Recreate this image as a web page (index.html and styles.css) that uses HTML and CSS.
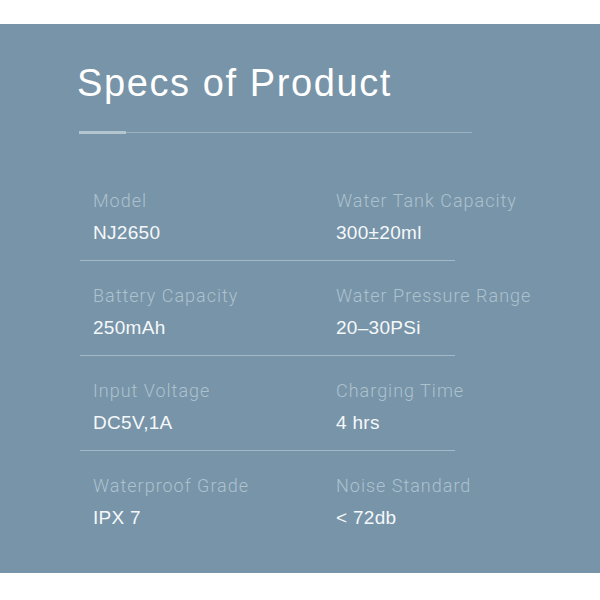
FILE: index.html
```html
<!DOCTYPE html>
<html lang="en">
<head>
<meta charset="utf-8">
<title>Specs of Product</title>
<link rel="stylesheet" href="styles.css">
</head>
<body>
<section class="panel">
  <h1 class="title">Specs of Product</h1>
  <div class="rule"><div class="rule-accent"></div></div>
  <div class="specs">
    <div class="row">
      <div class="cell first"><div class="label">Model</div><div class="value">NJ2650</div></div>
      <div class="cell"><div class="label">Water Tank Capacity</div><div class="value">300±20ml</div></div>
    </div>
    <div class="row">
      <div class="cell first"><div class="label">Battery Capacity</div><div class="value">250mAh</div></div>
      <div class="cell"><div class="label">Water Pressure Range</div><div class="value">20–30PSi</div></div>
    </div>
    <div class="row">
      <div class="cell first"><div class="label">Input Voltage</div><div class="value">DC5V,1A</div></div>
      <div class="cell"><div class="label">Charging Time</div><div class="value">4 hrs</div></div>
    </div>
    <div class="row last">
      <div class="cell first"><div class="label">Waterproof Grade</div><div class="value">IPX 7</div></div>
      <div class="cell"><div class="label">Noise Standard</div><div class="value">&lt; 72db</div></div>
    </div>
  </div>
</section>
</body>
</html>
```

FILE: styles.css
```css
html, body {
  margin: 0;
  padding: 0;
  background: #ffffff;
}
body {
  padding-top: 24px;
  font-family: "Liberation Sans", Arial, sans-serif;
}
.panel {
  background: #7894a8;
  padding: 39px 0 29px 77px;
  box-sizing: border-box;
  height: 549px;
}
.title {
  margin: 0;
  font-family: "Liberation Sans", Arial, sans-serif;
  font-weight: 400;
  font-size: 38px;
  line-height: 40px;
  letter-spacing: 1.6px;
  color: #ffffff;
}
.rule {
  display: flex;
  margin: 29px 0 0 2px;
  width: 393px;
  height: 1px;
  background: #9bb2c2;
}
.rule-accent {
  width: 47px;
  height: 3px;
  margin-top: -1px;
  background: #b3c5cf;
  flex: none;
}
.specs {
  margin: 33px 0 0 3px;
  width: 375px;
}
.row {
  display: grid;
  grid-template-columns: 256px 119px;
  padding: 23px 0 15px;
  border-bottom: 1px solid #a3b9c9;
}
.row.last {
  border-bottom: none;
}
.cell {
  white-space: nowrap;
}
.cell.first {
  padding-left: 13px;
}
.label {
  font-family: Roboto, "Liberation Sans", sans-serif;
  font-weight: 300;
  font-size: 18px;
  line-height: 24px;
  letter-spacing: 1px;
  color: #adc2cf;
}
.value {
  margin-top: 8px;
  font-family: "Liberation Sans", Arial, sans-serif;
  font-size: 19px;
  line-height: 24px;
  letter-spacing: 0.3px;
  color: #f5f8fa;
}
```
